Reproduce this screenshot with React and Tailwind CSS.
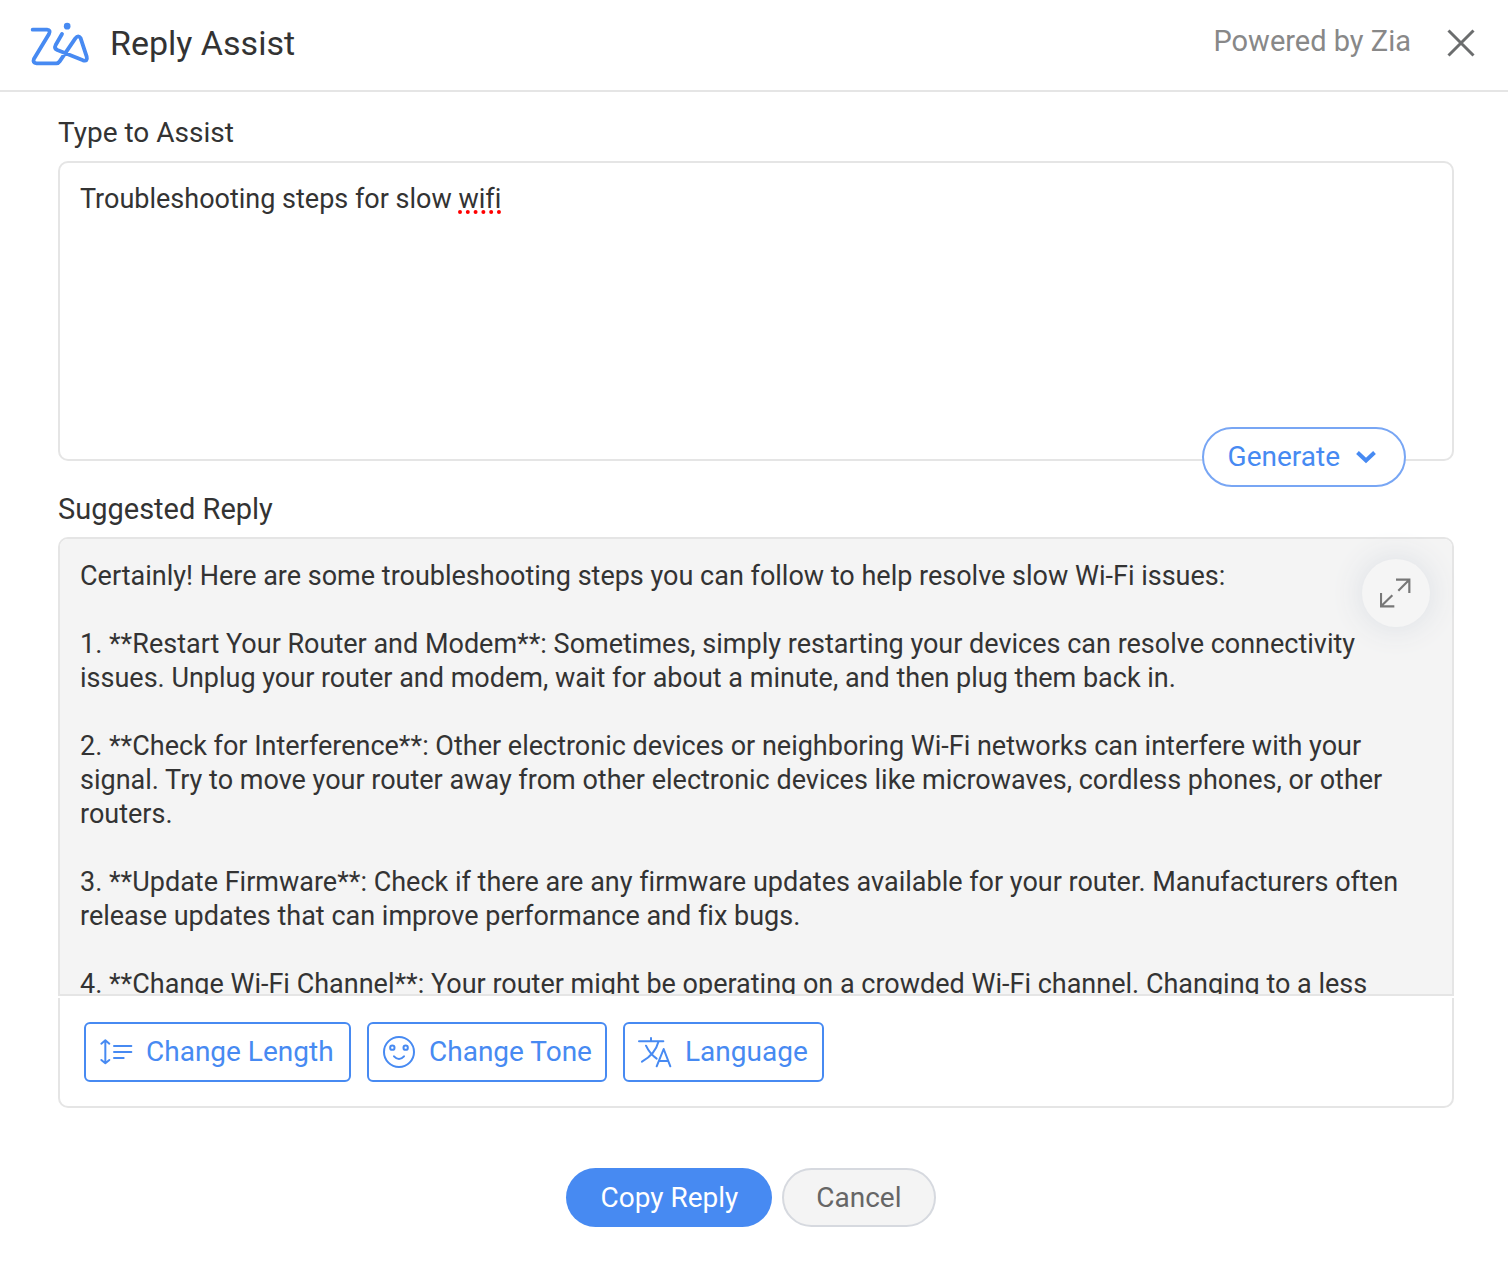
import { useState } from 'react'

const suggestedReply = `Certainly! Here are some troubleshooting steps you can follow to help resolve slow Wi-Fi issues:

1. **Restart Your Router and Modem**: Sometimes, simply restarting your devices can resolve connectivity issues. Unplug your router and modem, wait for about a minute, and then plug them back in.

2. **Check for Interference**: Other electronic devices or neighboring Wi-Fi networks can interfere with your signal. Try to move your router away from other electronic devices like microwaves, cordless phones, or other routers.

3. **Update Firmware**: Check if there are any firmware updates available for your router. Manufacturers often release updates that can improve performance and fix bugs.

4. **Change Wi-Fi Channel**: Your router might be operating on a crowded Wi-Fi channel. Changing to a less`

const misspelled = ['wifi']

function ZiaLogo() {
  return (
    <svg className="h-[45px] w-[60px]" viewBox="90 60 180 135" fill="none" stroke="#478af2" strokeWidth="11.5" strokeLinecap="round" strokeLinejoin="round" aria-hidden="true">
      <path d="M98 86H141Q153 87 147 99L102 173Q97 186 110 187H169Q175 187 179 181L226 112Q235 100 242 112L260 167Q264 182 249 178L172 147Q162 142 167 132L186 99" />
      <circle cx="201.500" cy="75.500" r="10" fill="#478af2" stroke="none" />
    </svg>
  )
}

function LengthIcon() {
  return (
    <svg className="h-8 w-[34px] shrink-0" viewBox="146 228 102 96" fill="none" stroke="currentColor" strokeWidth="6" strokeLinecap="round" strokeLinejoin="round" aria-hidden="true">
      <path d="M165 242V309M153 251L165 241L177 251M153 300L165 310L177 300" />
      <path d="M191 258H243M191 276H243M191 294H220" />
    </svg>
  )
}

function ToneIcon() {
  return (
    <svg className="h-8 w-[34px] shrink-0" viewBox="996 228 102 96" fill="none" stroke="currentColor" strokeWidth="6" strokeLinecap="round" aria-hidden="true">
      <circle cx="1047" cy="276" r="45" />
      <circle cx="1027" cy="263" r="6.500" />
      <circle cx="1067" cy="263" r="6.500" />
      <path d="M1032 289Q1047 305 1062 289" />
    </svg>
  )
}

function LanguageIcon() {
  return (
    <svg className="h-8 w-[34px] shrink-0" viewBox="594 108 102 96" fill="none" stroke="currentColor" strokeWidth="6" strokeLinecap="round" strokeLinejoin="round" aria-hidden="true">
      <path d="M597 124H670M633 114V123" />
      <path d="M655 126C649 150 632 170 606 185M618 137C625 152 637 167 650 176" />
      <path d="M650 199L671 147L691 199M658 183H685" />
    </svg>
  )
}

// textarea with a layer behind it that underlines the misspelled words
function AssistInput({ id, value, onChange }) {
  return (
    <div className="relative">
      <div aria-hidden="true" className="pointer-events-none absolute inset-0 whitespace-pre-wrap px-[22px] py-[21px] text-[27px] leading-[34px] text-transparent">
        {value.split(/(\s+)/).map((word, i) => (
          misspelled.includes(word)
            ? <span key={i} className="underline decoration-[#f00] decoration-dotted decoration-4 underline-offset-2 [text-decoration-skip-ink:none]">{word}</span>
            : word
        ))}
      </div>
      <textarea
        id={id}
        spellCheck={false}
        className="block h-[300px] w-full resize-none rounded-[10px] border-2 border-[#e5e5e5] px-5 py-[19px] text-[27px] leading-[34px] outline-none"
        value={value}
        onChange={onChange}
      />
    </div>
  )
}

export default function App() {
  const [prompt, setPrompt] = useState('Troubleshooting steps for slow wifi')

  const onClickCopy = () => {
    navigator.clipboard?.writeText(suggestedReply)
  }

  return (
    <div className="min-h-screen bg-white font-[Roboto,sans-serif] text-[#333] [font-variant-ligatures:none]">
      <header className="flex h-[92px] items-center justify-between border-b-2 border-[#e5e5e5] pb-1 pl-[30px] pr-[33px]">
        <div className="flex items-center gap-5">
          <ZiaLogo />
          <h1 className="text-[34px] leading-10">Reply Assist</h1>
        </div>
        <div className="flex items-center gap-9">
          <span className="pb-1 text-[29px] leading-10 text-[#888]">Powered by Zia</span>
          <button type="button" aria-label="Close" className="text-[#6b6d6e]">
            <svg className="h-7 w-7" viewBox="0 0 28 28" fill="none" stroke="currentColor" strokeWidth="3" aria-hidden="true">
              <path d="M1.500 1.500L26.500 26.500M26.500 1.500L1.500 26.500" />
            </svg>
          </button>
        </div>
      </header>

      <main className="pb-12 pl-[58px] pr-[54px] pt-[21px]">
        <label htmlFor="assist" className="mb-2 block text-[28px] leading-10">Type to Assist</label>
        <div className="relative">
          <AssistInput id="assist" value={prompt} onChange={(e) => setPrompt(e.target.value)} />
          <button type="button" className="absolute -bottom-[26px] right-12 flex h-[60px] items-center gap-4 rounded-full border-2 border-[#78a6f4] bg-white pl-6 pr-7 text-[28px] text-[#478af2]">
            Generate
            <svg className="h-4 w-5" viewBox="0 0 20 16" fill="none" stroke="currentColor" strokeWidth="4" aria-hidden="true">
              <path d="M1.500 3.500L10 11.500L18.500 3.500" />
            </svg>
          </button>
        </div>

        <label htmlFor="reply" className="mb-2 mt-7 block text-[29px] leading-10">Suggested Reply</label>
        <div className="relative">
          <textarea
            id="reply"
            readOnly
            className="block h-[459px] w-full resize-none rounded-t-[10px] border-2 border-[#e5e5e5] bg-[#f4f4f4] px-5 py-5 text-[27px] leading-[34px] outline-none [scrollbar-width:none]"
            value={suggestedReply}
          />
          <button type="button" aria-label="Expand" className="absolute right-6 top-[22px] flex h-[68px] w-[68px] items-center justify-center rounded-full bg-[#f5f5f5] text-[#777] shadow-[0_0_32px_#d9dde3]">
            <svg className="h-8 w-8" viewBox="180 171 96 96" fill="none" stroke="currentColor" strokeWidth="6.5" aria-hidden="true">
              <path d="M228 179H268V219M267 180L235 212M183 219V259H223M184 258L217 226" />
            </svg>
          </button>
        </div>

        <div className="mt-0.5 flex flex-wrap gap-4 rounded-b-[10px] border-2 border-t-0 border-[#e5e5e5] p-6 text-[28px] text-[#478af2]">
          <button type="button" className="flex h-[60px] min-w-[267px] items-center gap-[13px] rounded-md border-2 border-[#478af2] px-[13px]">
            <LengthIcon />
            Change Length
          </button>
          <button type="button" className="flex h-[60px] min-w-60 items-center gap-[13px] rounded-md border-2 border-[#478af2] px-[13px]">
            <ToneIcon />
            Change Tone
          </button>
          <button type="button" className="flex h-[60px] min-w-[201px] items-center gap-[13px] rounded-md border-2 border-[#478af2] px-[13px]">
            <LanguageIcon />
            Language
          </button>
        </div>

        <div className="mt-[60px] flex justify-center gap-2.5 pr-2.5 text-[28px]">
          <button type="button" className="h-[59px] rounded-full bg-[#478af2] px-[34px] text-white" onClick={onClickCopy}>Copy Reply</button>
          <button type="button" className="h-[59px] rounded-full border-2 border-[#d6d9df] bg-[#f4f4f4] px-8 text-[#666]">Cancel</button>
        </div>
      </main>
    </div>
  )
}
